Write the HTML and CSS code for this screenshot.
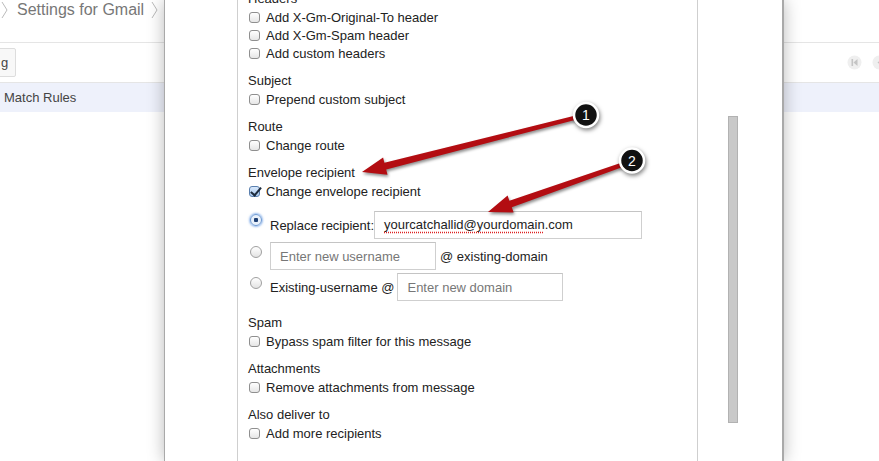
FILE: index.html
```html
<!DOCTYPE html>
<html lang="en">

<head>
    <meta charset="UTF-8">
    <title>Settings for Gmail - Envelope recipient</title>
    <link rel="stylesheet" href="styles.css">
</head>

<body>
    <div class="page">
        <div class="crumbs">
            <svg class="chev" width="8" height="20" viewBox="0 0 8 20"><polyline points="1,2 6,10 1,18" /></svg>
            <span class="crumb-title">Settings for Gmail</span>
            <svg class="chev" width="8" height="20" viewBox="0 0 8 20"><polyline points="1,2 6,10 1,18" /></svg>
        </div>

        <div class="toolbar">
            <button class="tool-btn">g</button>
            <div class="pager">
                <svg width="15" height="15" viewBox="0 0 15 15">
                    <circle cx="7.5" cy="7.5" r="7" fill="#efefef" />
                    <rect x="4.5" y="4" width="1.6" height="7" fill="#c4c4c4" />
                    <polygon points="10.5,4 10.5,11 6.5,7.5" fill="#c4c4c4" />
                </svg>
                <svg width="15" height="15" viewBox="0 0 15 15">
                    <circle cx="7.5" cy="7.5" r="7" fill="#efefef" />
                    <polygon points="9.5,4 9.5,11 5.5,7.5" fill="#c4c4c4" />
                </svg>
            </div>
        </div>

        <div class="rule-row">Match Rules</div>
    </div>

    <div class="dialog">
        <div class="panel">
            <div class="scroll">
                <div class="group">
                    <div class="group-title">Headers</div>
                    <label class="opt"><input type="checkbox">Add X-Gm-Original-To header</label>
                    <label class="opt"><input type="checkbox">Add X-Gm-Spam header</label>
                    <label class="opt"><input type="checkbox">Add custom headers</label>
                </div>

                <div class="group">
                    <div class="group-title">Subject</div>
                    <label class="opt"><input type="checkbox">Prepend custom subject</label>
                </div>

                <div class="group">
                    <div class="group-title">Route</div>
                    <label class="opt"><input type="checkbox">Change route</label>
                </div>

                <div class="group group-env">
                    <div class="group-title">Envelope recipient</div>
                    <label class="opt"><input type="checkbox" checked>Change envelope recipient</label>

                    <div class="radio-row first">
                        <input type="radio" name="rcpt" checked>
                        <span class="radio-label">Replace recipient:</span>
                        <div class="field field-wide"><span class="typo">yourcatchallid@yourdomain</span>.com</div>
                    </div>
                    <div class="radio-row">
                        <input type="radio" name="rcpt">
                        <input class="field" type="text" placeholder="Enter new username">
                        <span class="radio-after">@ existing-domain</span>
                    </div>
                    <div class="radio-row">
                        <input type="radio" name="rcpt">
                        <span class="radio-label spaced">Existing-username @</span>
                        <input class="field field-domain" type="text" placeholder="Enter new domain">
                    </div>
                </div>

                <div class="group">
                    <div class="group-title">Spam</div>
                    <label class="opt"><input type="checkbox">Bypass spam filter for this message</label>
                </div>

                <div class="group">
                    <div class="group-title">Attachments</div>
                    <label class="opt"><input type="checkbox">Remove attachments from message</label>
                </div>

                <div class="group">
                    <div class="group-title">Also deliver to</div>
                    <label class="opt"><input type="checkbox">Add more recipients</label>
                </div>
            </div>
        </div>

        <div class="track">
            <div class="thumb"></div>
        </div>
    </div>

    <!-- callout arrows -->
    <svg class="callouts" width="879" height="461" viewBox="0 0 879 461">
        <g class="arrow">
            <polygon points="362,172 383.1,157.4 384.4,162.7 585.5,113.1 586.5,116.9 386.2,169.5 387.5,174.8" />
            <polygon points="488,212 507.6,195.5 509.4,200.7 632.3,159.1 633.7,162.9 511.8,207.3 513.6,212.5" />
        </g>
        <g class="badge">
            <circle cx="586" cy="115" r="12" />
            <text x="586" y="120">1</text>
        </g>
        <g class="badge">
            <circle cx="632" cy="160.5" r="12" />
            <text x="632" y="165.5">2</text>
        </g>
    </svg>
</body>

</html>
```

FILE: styles.css
```css
:root {
    --text: #222;
    --muted: #777;
    --line: #e5e5e5;
    --row-blue: #eef1fb;
    --field-border: #cfcfcf;
}

* {
    box-sizing: border-box;
}

body {
    margin: 0;
    width: 879px;
    height: 461px;
    overflow: hidden;
    position: relative;
    font-family: "Liberation Sans", Arial, sans-serif;
    font-size: 13px;
    color: var(--text);
    background: #fff;
}

/* gmail page behind the dialog */
.page {
    width: 879px;
}

.crumbs {
    height: 43px;
    border-bottom: 1px solid var(--line);
    display: flex;
    align-items: flex-start;
    gap: 4px;
    padding-left: 1px;
}

.chev polyline {
    fill: none;
    stroke: #bbb;
    stroke-width: 1;
}

.crumb-title {
    font-size: 16px;
    color: var(--muted);
    line-height: 20px;
    margin: 0 3px 0 4px;
}

.toolbar {
    height: 40px;
    border-bottom: 1px solid var(--line);
    display: flex;
    align-items: center;
    justify-content: space-between;
}

.tool-btn {
    height: 29px;
    margin-left: -4px;
    padding: 0 7px 0 4px;
    border: 1px solid #ddd;
    border-radius: 2px;
    background: #f8f8f8;
    font-family: inherit;
    font-size: 13px;
    color: #444;
}

.pager {
    display: flex;
    gap: 10px;
    margin-right: -8px;
}

.rule-row {
    height: 29px;
    line-height: 29px;
    padding-left: 4px;
    background: var(--row-blue);
    color: #444;
}

/* modal */
.dialog {
    position: absolute;
    top: 0;
    left: 164px;
    width: 620px;
    height: 461px;
    background: #fff;
    border-left: 1px solid #a9a9a9;
    border-right: 2px solid #a9a9a9;
    box-shadow: 0 0 16px rgba(0, 0, 0, 0.28);
    display: flex;
}

.panel {
    width: 461px;
    margin-left: 72px;
    height: 100%;
    border-left: 1px solid #cfcfcf;
    border-right: 1px solid #cfcfcf;
    overflow: hidden;
}

.scroll {
    margin-top: -10px;
    padding-left: 10px;
}

.track {
    flex: 1;
}

.thumb {
    margin: 116px 0 0 30px;
    width: 10px;
    height: 307px;
    background: #c9c9c9;
    border: 1px solid #b2b2b2;
}

.group {
    margin-bottom: 10px;
}

.group-env {
    margin-bottom: 13px;
}

.group-title {
    line-height: 18px;
    height: 18px;
}

.opt {
    display: flex;
    align-items: center;
    height: 18px;
}

.opt input[type="checkbox"] {
    appearance: none;
    width: 11px;
    height: 11px;
    margin: 0 6px 0 1px;
    border: 1px solid #8f8f8f;
    border-radius: 3px;
    background: linear-gradient(#ffffff, #e6e6e6);
    position: relative;
}

.opt input[type="checkbox"]:checked {
    background: linear-gradient(#d8e8fb, #a9c9ef);
    border-color: #5a7fae;
}

.opt input[type="checkbox"]:checked::after {
    content: "";
    position: absolute;
    left: 3px;
    top: -2px;
    width: 4px;
    height: 9px;
    border-right: 2px solid #1d2b3d;
    border-bottom: 2px solid #1d2b3d;
    transform: rotate(40deg);
}

.radio-row {
    display: flex;
    align-items: center;
    height: 28px;
    margin-bottom: 3px;
}

.radio-row.first {
    margin-top: 11px;
}

.radio-row input[type="radio"] {
    appearance: none;
    align-self: flex-start;
    width: 12px;
    height: 12px;
    margin: 4px 8px 0 2px;
    border: 1px solid #a0a0a0;
    border-radius: 50%;
    background: linear-gradient(#ffffff, #e3e3e3);
}

.radio-row input[type="radio"]:checked {
    margin-top: 3px;
    border-color: #6e9ad3;
    background: radial-gradient(circle, #1e3f74 0 2px, #e9f1fb 2.5px);
    box-shadow: 0 0 2px 1px rgba(110, 160, 230, 0.7);
}

.radio-label {
    margin-right: 0;
}

.radio-label.spaced {
    margin-right: 3px;
}

.radio-after {
    margin-left: 4px;
}

.field {
    height: 28px;
    width: 166px;
    padding: 0 9px;
    border: 1px solid var(--field-border);
    border-top-color: #c4c4c4;
    font-family: inherit;
    font-size: 13px;
    color: var(--text);
    line-height: 26px;
    background: #fff;
}

.field::placeholder {
    color: var(--muted);
}

.field-wide {
    width: 268px;
}

.typo {
    text-decoration: underline dotted #d22;
    text-underline-offset: 3px;
}

/* skitch style callouts */
.callouts {
    position: absolute;
    top: 0;
    left: 0;
    pointer-events: none;
}

.arrow {
    fill: #b30d12;
    filter: drop-shadow(1px 2px 1.5px rgba(0, 0, 0, 0.45));
}

.badge circle {
    fill: #111;
    stroke: #fff;
    stroke-width: 2.5;
    filter: drop-shadow(1px 2px 2px rgba(0, 0, 0, 0.5));
}

.badge text {
    fill: #fff;
    font-family: "Liberation Sans", Arial, sans-serif;
    font-size: 14px;
    text-anchor: middle;
}
```
